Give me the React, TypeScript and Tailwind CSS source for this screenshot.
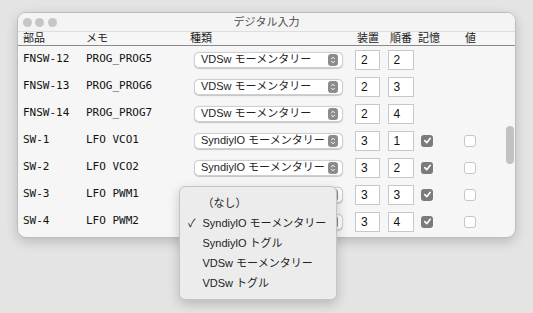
import { ChevronDown, ChevronUp } from 'lucide-react';

type Row = {
  part: string;
  memo: string;
  kind: string;
  device: string;
  order: string;
  check?: boolean;
};

const rows: Row[] = [
  { part: 'FNSW-12', memo: 'PROG_PROG5', kind: 'VDSw モーメンタリー', device: '2', order: '2' },
  { part: 'FNSW-13', memo: 'PROG_PROG6', kind: 'VDSw モーメンタリー', device: '2', order: '3' },
  { part: 'FNSW-14', memo: 'PROG_PROG7', kind: 'VDSw モーメンタリー', device: '2', order: '4' },
  { part: 'SW-1', memo: 'LFO VCO1', kind: 'SyndiylO モーメンタリー', device: '3', order: '1', check: true },
  { part: 'SW-2', memo: 'LFO VCO2', kind: 'SyndiylO モーメンタリー', device: '3', order: '2', check: true },
  { part: 'SW-3', memo: 'LFO PWM1', kind: 'SyndiylO モーメンタリー', device: '3', order: '3', check: true },
  { part: 'SW-4', memo: 'LFO PWM2', kind: 'SyndiylO モーメンタリー', device: '3', order: '4', check: true },
];

const menuItems = ['（なし）', 'SyndiylO モーメンタリー', 'SyndiylO トグル', 'VDSw モーメンタリー', 'VDSw トグル'];

const sans = "font-['Liberation_Sans','Noto_Sans_CJK_JP',sans-serif]";
const mono = "font-['DejaVu_Sans_Mono','Noto_Sans_CJK_JP',monospace]";

const Select = ({ value }: { value: string }) => (
  <div className="ml-[4px] w-[149px] h-[16px] flex items-center justify-between bg-white rounded-[5px] border-[0.5px] border-[#cfcfcf] shadow-[0_0.5px_1px_rgba(0,0,0,0.2)] pl-[6px] pr-[4px]">
    <span className="text-[11px] text-[#222] leading-none whitespace-nowrap">{value}</span>
    <div className="w-[10px] h-[12px] rounded-[3px] bg-[#8c8c8c] flex flex-col items-center justify-center text-white">
      <ChevronUp size={6} strokeWidth={4} className="-mb-[1px]" />
      <ChevronDown size={6} strokeWidth={4} className="-mt-[1px]" />
    </div>
  </div>
);

const Field = ({ value, className }: { value: string; className: string }) => (
  <div className={`${className} h-[20px] bg-white border border-[#c8c8c8] flex items-center pl-[5px] text-[12px] text-[#111]`}>
    {value}
  </div>
);

const Check = ({ on }: { on: boolean }) =>
  on ? (
    <div className="w-[12px] h-[12px] rounded-[3px] bg-[#7b7b7b] flex items-center justify-center">
      <svg width="9" height="9" viewBox="0 0 10 10" fill="none">
        <path d="M2 5.2 L4.2 7.4 L8 2.6" stroke="white" strokeWidth="1.8" strokeLinecap="round" strokeLinejoin="round" />
      </svg>
    </div>
  ) : (
    <div className="w-[12px] h-[12px] rounded-[3px] bg-white border border-[#c6c6c6]" />
  );

const App = () => {
  return (
    <div className={`relative w-[533px] h-[313px] overflow-hidden bg-[#e4e4e4] pt-[12px] pl-[17px] ${sans}`}>
      {/* Window */}
      <div className="relative w-[499px] h-[226px] rounded-[9px] bg-[#f6f6f6] border-[0.5px] border-[#bdbdbd] shadow-[0_4px_12px_rgba(0,0,0,0.18)] overflow-hidden">
        {/* Title bar */}
        <div className="relative h-[19px] flex items-center border-b border-[#dedede] bg-[#f4f4f4]">
          <div className="flex gap-[3.5px] pl-[4.5px]">
            <div className="w-[9px] h-[9px] rounded-full bg-[#c6c6c6]" />
            <div className="w-[9px] h-[9px] rounded-full bg-[#c6c6c6]" />
            <div className="w-[9px] h-[9px] rounded-full bg-[#c6c6c6]" />
          </div>
          <div className="absolute inset-0 flex items-center justify-center text-[11px] text-[#4c4c4c]">デジタル入力</div>
        </div>

        {/* Header */}
        <div className="h-[14px] flex items-center border-b border-[#8a8a8a] text-[11px] text-[#222] leading-none">
          <div className="w-[68px] pl-[5px]">部品</div>
          <div className="w-[104px]">メモ</div>
          <div className="w-[163px]">種類</div>
          <div className="w-[33px] pl-[4px]">装置</div>
          <div className="w-[31px] pl-[4px]">順番</div>
          <div className="w-[44px] pl-[1px]">記憶</div>
          <div className="pl-[4px]">値</div>
        </div>

        {/* Rows */}
        {rows.map((r) => (
          <div key={r.part} className="h-[27px] flex items-center">
            <div className={`w-[68px] pl-[5px] text-[11px] text-[#111] ${mono}`}>{r.part}</div>
            <div className={`w-[104px] text-[11px] text-[#111] whitespace-pre ${mono}`}>{r.memo}</div>
            <div className="w-[163px]">
              <Select value={r.kind} />
            </div>
            <div className="w-[33px]">
              <Field value={r.device} className="ml-[2px] w-[25px]" />
            </div>
            <div className="w-[31px]">
              <Field value={r.order} className="ml-[1.5px] w-[26px]" />
            </div>
            <div className="w-[44px] pl-[4px]">{r.check !== undefined && <Check on={r.check} />}</div>
            <div className="pl-[3px]">{r.check !== undefined && <Check on={false} />}</div>
          </div>
        ))}

        {/* Scrollbar */}
        <div className="absolute left-[488px] top-[113px] w-[8px] h-[38px] rounded-full bg-[#c2c2c2]" />
      </div>

      {/* Popup menu */}
      <div className="absolute left-[179px] top-[186px] w-[158px] py-[6px] rounded-[6px] bg-[#ececec] border-[0.5px] border-[#c4c4c4] shadow-[0_4px_12px_rgba(0,0,0,0.2)]">
        {menuItems.map((item, i) => (
          <div key={item} className="relative h-[20px] flex items-center pl-[22.5px] text-[11px] text-[#222] whitespace-nowrap">
            {i === 1 && <span className="absolute left-[8px] text-[11px]">✓</span>}
            {item}
          </div>
        ))}
      </div>
    </div>
  );
};

export default App;
